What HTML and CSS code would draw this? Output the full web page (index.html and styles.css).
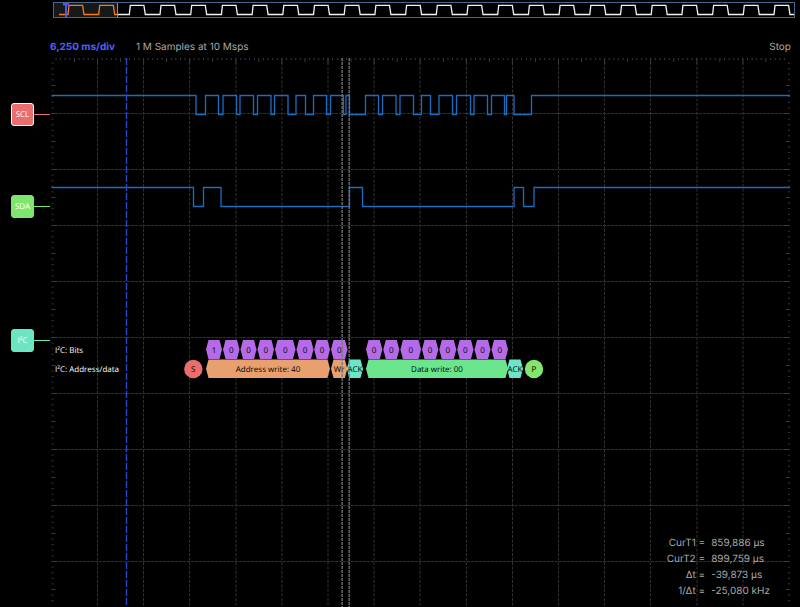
FILE: index.html
```html
<!DOCTYPE html>
<html lang="en">
<head>
<meta charset="utf-8">
<title>Logic analyzer</title>
<link rel="stylesheet" href="styles.css">
</head>
<body>
<header class="overview">
  <svg class="overview-svg" viewBox="53 2 742 16" preserveAspectRatio="none" role="img" aria-label="Capture overview">
    <rect class="window" x="54" y="3" width="63" height="14"/>
    <rect class="frame" x="53.5" y="2.5" width="741" height="15"/>
    <path class="ov-rest" id="ov-rest"/>
    <path class="ov-active" id="ov-active"/>
    <path class="window-edge" d="M117.5 3V17"/>
    <path class="trigger-mark" d="M63 3H69V5.5H67V17H65V5.5H63Z"/>
  </svg>
</header>

<div class="status">
  <strong class="timebase">6,250 ms/div</strong>
  <span>1 M Samples at 10 Msps</span>
  <span class="run-state">Stop</span>
</div>

<main class="scope">
  <nav class="rail" aria-label="Channels">
    <div class="channel scl"><button type="button">SCL</button></div>
    <div class="channel sda"><button type="button">SDA</button></div>
    <div class="channel i2c"><button type="button">I²C</button></div>
  </nav>
  <section class="plot">
    <svg class="plot-svg" viewBox="50 56 750 551" preserveAspectRatio="xMinYMin meet" role="img" aria-label="Signal traces">
      <g id="grid"></g>
      <g id="traces"></g>
      <path class="trigger" d="M126.5 58V607"/>
      <g id="decoder"></g>
      <text class="row-label" x="55" y="353">I²C: Bits</text>
      <text class="row-label" x="55" y="372">I²C: Address/data</text>
      <path class="cursor" d="M342.2 58V607M349.2 58V607"/>
    </svg>
    <dl class="readout">
      <dt>CurT1 =</dt><dd>859,886 µs</dd>
      <dt>CurT2 =</dt><dd>899,759 µs</dd>
      <dt>Δt =</dt><dd>-39,873 µs</dd>
      <dt>1/Δt =</dt><dd>-25,080 kHz</dd>
    </dl>
  </section>
</main>
<script src="script.js"></script>
</body>
</html>
```

FILE: styles.css
```css
* { box-sizing: border-box; }

body {
  margin: 0;
  background: #000;
  color: #a8a8a8;
  font: 10px/16px Inter, "Liberation Sans", sans-serif;
  text-rendering: geometricPrecision;
}

.overview { padding: 2px 5px 0 53px; }
.overview-svg { display: block; width: 100%; height: 16px; }
.overview-svg path { fill: none; }
.overview-svg .window { fill: #17181a; }
.overview-svg .frame { fill: none; stroke: #46688f; }
.overview-svg .ov-rest { stroke: #f2f2f2; stroke-width: 1.3; }
.overview-svg .ov-active { stroke: #f57c14; stroke-width: 1.3; }
.overview-svg .window-edge { stroke: #e8791b; }
.overview-svg .trigger-mark { fill: #4459ee; }

.status {
  display: flex;
  gap: 21px;
  padding: 21px 9px 1px 50px;
}
.timebase { color: #4f63f5; font-weight: 700; }
.run-state { margin-left: auto; }

.scope { display: flex; }

.rail {
  flex: none;
  width: 50px;
  padding-top: 47px;
}
.channel {
  display: flex;
  align-items: center;
  height: 23px;
  padding-left: 11px;
}
.channel::after {
  content: "";
  flex: 1;
  height: 1px;
  background: var(--tone);
}
.channel button {
  width: 23px;
  height: 23px;
  padding: 0;
  border: 1px solid var(--tone);
  border-radius: 3px;
  background: var(--tone);
  color: #fff;
  font: 500 8px/20px "Open Sans", sans-serif;
  text-align: center;
  text-rendering: geometricPrecision;
}
.scl { --tone: #ea6e6e; }
.scl button { border-color: #fff; }
.sda { --tone: #7ee66c; margin-top: 69px; }
.i2c { --tone: #6ce6c0; margin-top: 111px; }

.plot { position: relative; flex: 1; min-width: 0; }
.plot-svg { display: block; width: 100%; height: 551px; }
.plot-svg path { fill: none; }
.plot-svg .grid-x { stroke: #303030; stroke-dasharray: 3 1; }
.plot-svg .grid-y { stroke: #303030; stroke-dasharray: 3 1.5; }
.tick { stroke: #3a3a3a; }
.trace { stroke: #1c6cc0; stroke-width: 1.3; }
.trigger { stroke: #2f45c8; stroke-dasharray: 7 2; stroke-width: 1.4; }
.cursor { stroke: #777; stroke-dasharray: 3 1; stroke-width: 1.3; }

.plot-svg text { font: 400 8px "Open Sans", sans-serif; }
.plot-svg .row-label { fill: #fff; }
.plot-svg .note { fill: #000; font-weight: 500; text-anchor: middle; }
.bit { fill: #b56ae8; }
.address { fill: #e8a06e; }
.ack { fill: #6ce6c8; }
.data { fill: #6ce68c; }
.start { fill: #ea6e6e; }
.stop { fill: #84e66c; }

.readout {
  position: absolute;
  right: 30px;
  bottom: 8px;
  display: grid;
  grid-template-columns: auto auto;
  column-gap: 6px;
  margin: 0;
}
.readout dt { text-align: right; }
.readout dd { margin: 0; }
```

FILE: script.js
```js
const NS = "http://www.w3.org/2000/svg";

function add(parent, tag, attrs, text) {
  const el = document.createElementNS(NS, tag);
  for (const name in attrs) el.setAttribute(name, attrs[name]);
  if (text) el.textContent = text;
  document.getElementById(parent).appendChild(el);
}

// Square wave that starts high and toggles at every edge
function wave(edges, high, low, end) {
  let d = `M51.5 ${high}`;
  edges.forEach((x, i) => { d += `H${x}V${i % 2 ? high : low}`; });
  return d + `H${end}`;
}

// Graticule
const LEFT = 51.4, STEP = 46.1, ROW = 56, TOP = 57.5;
for (let i = 1; i < 16; i++) {
  const x = Math.round((LEFT + i * STEP) * 2) / 2;
  add("grid", "path", { class: "grid-y", d: `M${x} 58V607` });
}
for (let i = 1; i < 10; i++) {
  add("grid", "path", { class: "grid-x", d: `M51 ${TOP + i * ROW}H790` });
}
let ticks = "";
for (let i = 1; i < 160; i++) {
  const x = LEFT + i * STEP / 10;
  ticks += `M${x} 58v${i % 10 === 0 ? 6 : i % 5 === 0 ? 4 : 2}`;
}
for (let i = 1; i < 98; i++) {
  const y = TOP + i * ROW / 10;
  const len = i % 10 === 0 ? 6 : i % 5 === 0 ? 4 : 2;
  ticks += `M51.5 ${y}h${len}M790 ${y}h${-len}`;
}
add("grid", "path", { class: "tick", d: ticks });

// Signals
const scl = [196, 205.5, 218.5, 223, 236.5, 240, 253.5, 257.5, 271, 274.5, 288, 296,
  305.5, 313.5, 326.5, 330.5, 343.5, 346, 349.5, 365.5, 378.5, 382.5, 396, 400,
  413.5, 421.5, 430.5, 439, 452.5, 456.5, 470.5, 474, 487.5, 491.5, 504.5, 506.5,
  514, 531.5];
const sda = [193.5, 203.5, 221, 349.5, 362.5, 514, 523.5, 534];
add("traces", "path", { class: "trace", d: wave(scl, 95.5, 114.5, 790) });
add("traces", "path", { class: "trace", d: wave(sda, 187.5, 206.5, 790) });

// Decoder annotations
function box(kind, x1, x2, y1, y2, label) {
  const mid = (y1 + y2) / 2;
  const inset = 2.5;
  add("decoder", "polygon", {
    class: kind,
    points: `${x1},${mid} ${x1 + inset},${y1} ${x2 - inset},${y1} ${x2},${mid} ${x2 - inset},${y2} ${x1 + inset},${y2}`
  });
  add("decoder", "text", { class: "note", x: (x1 + x2) / 2, y: mid + 3 }, label);
}
function dot(kind, x, label) {
  add("decoder", "circle", { class: kind, cx: x, cy: 369, r: 9.2 });
  add("decoder", "text", { class: "note", x: x, y: 372 }, label);
}
const bits = [
  [206, 222, "1"], [223, 239.5, "0"], [240.5, 256.5, "0"], [257.5, 274, "0"],
  [275, 295.5, "0"], [296.5, 313.5, "0"], [314.2, 330, "0"], [331, 347.5, "0"],
  [366, 382.3, "0"], [383.3, 399.3, "0"], [400.4, 421, "0"], [422, 438.3, "0"],
  [439.3, 456.3, "0"], [457.2, 473.5, "0"], [474.5, 490.5, "0"], [491.5, 508, "0"]
];
bits.forEach(([a, b, label]) => box("bit", a, b, 340, 359, label));
box("address", 206, 330, 359.6, 378, "Address write: 40");
box("address", 331, 347.3, 359.6, 378, "Wr");
box("ack", 346.8, 363, 359.6, 378, "ACK");
box("data", 366, 508, 359.6, 378, "Data write: 00");
box("ack", 507, 523, 359.6, 378, "ACK");
dot("start", 193.3, "S");
dot("stop", 534, "P");

// Overview waveform: sloped square clock, the first cycles lie in the visible window
const PERIOD = 30.7, HI = 5.4, LO = 14.5;
function clock(first, count) {
  let d = "";
  for (let i = 0; i < count; i++) {
    const x = first + i * PERIOD;
    d += `L${x} ${LO}L${x + 1} ${HI}L${x + 14.6} ${HI}L${x + 16} ${LO}`;
  }
  return d;
}
document.getElementById("ov-active").setAttribute("d", `M59 ${LO}` + clock(68, 2) + `H117`);
document.getElementById("ov-rest").setAttribute("d", `M118 ${LO}` + clock(129.3, 22) + `H794`);
```
